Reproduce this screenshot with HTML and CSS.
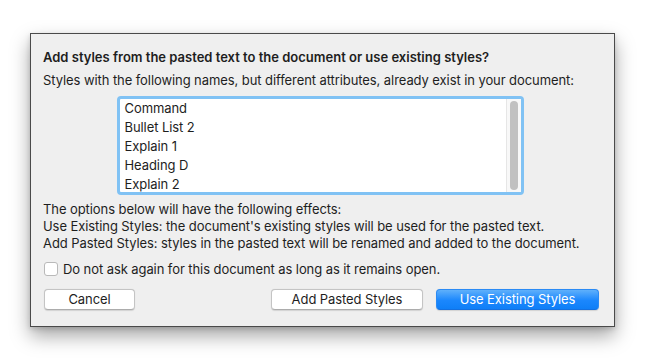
FILE: index.html
```html
<!DOCTYPE html>
<html>

<head>
  <title>Paste Styles</title>
  <link rel="stylesheet" href="styles.css">
</head>

<body>
  <div class="dialog">
    <div class="title">Add styles from the pasted text to the document or use existing styles?</div>
    <div class="line">Styles with the following names, but different attributes, already exist in your document:</div>

    <div class="listbox">
      <div class="items">
        <div class="item">Command</div>
        <div class="item">Bullet List 2</div>
        <div class="item">Explain 1</div>
        <div class="item">Heading D</div>
        <div class="item">Explain 2</div>
      </div>
      <div class="track">
        <div class="thumb"></div>
      </div>
    </div>

    <div class="effects">
      <div>The options below will have the following effects:</div>
      <div>Use Existing Styles: the document's existing styles will be used for the pasted text.</div>
      <div>Add Pasted Styles: styles in the pasted text will be renamed and added to the document.</div>
    </div>

    <label class="check">
      <span class="box"></span>
      <span>Do not ask again for this document as long as it remains open.</span>
    </label>

    <div class="buttons">
      <div class="button cancel">Cancel</div>
      <div class="spacer"></div>
      <div class="button paste">Add Pasted Styles</div>
      <div class="button default">Use Existing Styles</div>
    </div>
  </div>
</body>

</html>
```

FILE: styles.css
```css
body {
  margin: 0;
  padding: 33px 0 0 30px;
  height: 359px;
  box-sizing: border-box;
  background: #ffffff;
  font-family: Inter, "Liberation Sans", Arial, sans-serif;
  font-size: 13px;
  letter-spacing: -0.08px;
  color: #1e1e1e;
}
.dialog {
  box-sizing: border-box;
  width: 585px;
  height: 294px;
  padding: 15px 15px 0 12px;
  background: #efefef;
  border: 1px solid #4a4a4a;
  box-shadow: 0 9px 18px rgba(0, 0, 0, 0.35), 0 2px 5px rgba(0, 0, 0, 0.15);
}
.title {
  font-weight: 600;
  line-height: 16px;
  letter-spacing: 0;
}
.line {
  line-height: 16px;
  margin-top: 7px;
}
.listbox {
  display: flex;
  box-sizing: border-box;
  width: 407px;
  height: 99px;
  margin: 8px auto 0 auto;
  position: relative;
  left: -1px;
  border: 3px solid #80c2f4;
  border-radius: 4px;
  background: #fff;
}
.items {
  flex: 1;
  padding-left: 5px;
}
.item {
  line-height: 19px;
}
.track {
  width: 14px;
  background: #f8f8f8;
  border-left: 1px solid #e6e6e6;
  padding: 2px 0;
  display: flex;
  justify-content: center;
}
.thumb {
  width: 8px;
  margin-left: 1px;
  background: #c1c1c1;
  border-radius: 4px;
}
.effects {
  margin-top: 6px;
  line-height: 17px;
}
.check {
  display: flex;
  align-items: center;
  margin-top: 9px;
  line-height: 16px;
}
.box {
  box-sizing: border-box;
  width: 14px;
  height: 14px;
  margin-left: 1px;
  margin-right: 5px;
  background: #fff;
  border: 1px solid #b9b9b9;
  border-radius: 3px;
}
.buttons {
  display: flex;
  gap: 13px;
  margin-top: 12px;
  margin-left: 1px;
}
.spacer {
  flex: 1;
}
.button {
  box-sizing: border-box;
  height: 21px;
  line-height: 19px;
  text-align: center;
  background: #fff;
  border: 1px solid #c4c4c4;
  border-bottom-color: #acacac;
  border-radius: 4px;
  box-shadow: 0 0.5px 1px rgba(0, 0, 0, 0.12);
}
.cancel {
  width: 91px;
}
.paste {
  width: 152px;
}
.default {
  width: 163px;
  color: #fff;
  border: 1px solid #2a8af4;
  border-bottom-color: #1470e0;
  background: linear-gradient(#5fb0fb, #1b87fd 55%, #0f7ff7);
}
```
